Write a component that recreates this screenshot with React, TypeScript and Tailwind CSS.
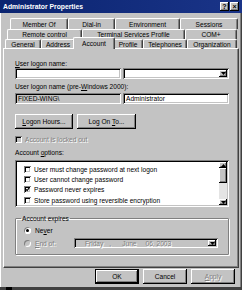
import React from "react";

const raised =
    "bg-[#c3c3c3] shadow-[inset_-1px_-1px_#000,inset_1px_1px_#fff,inset_-2px_-2px_#808080]";
const sunken =
    "shadow-[inset_1px_1px_#808080,inset_-1px_-1px_#fff,inset_2px_2px_#000,inset_-2px_-2px_#c3c3c3]";
const disabledText = "text-[#808080] [text-shadow:1px_1px_0_#fff]";

function Tab({ label, w, active }: { label: string; w: number; active?: boolean }) {
    return (
        <div
            style={{ width: w }}
            className={
                "flex shrink-0 items-center justify-center rounded-t-[2px] border-t border-l border-r border-t-white border-l-white border-r-[#404040] bg-[#c3c3c3] shadow-[inset_-1px_0_#808080] " +
                (active ? "relative z-10 -mb-[1px] -mx-[2px] h-[12px] pb-[1px]" : "h-full")
            }
        >
            {label}
        </div>
    );
}

function DropBtn() {
    return (
        <div className={"flex h-full w-[8px] shrink-0 items-center justify-center " + raised}>
            <svg width="5" height="3" viewBox="0 0 5 3">
                <path d="M0 0h5L2.5 3z" fill="#000" />
            </svg>
        </div>
    );
}

function Check({ checked, label }: { checked?: boolean; label: string }) {
    return (
        <div className="flex h-[10.3px] items-center">
            <div className={"ml-[7px] flex h-[7px] w-[7px] items-center justify-center bg-white " + sunken}>
                {checked && (
                    <svg width="5" height="5" viewBox="0 0 7 7">
                        <path d="M1 3l2 2 3-4" stroke="#000" strokeWidth="1.6" fill="none" />
                    </svg>
                )}
            </div>
            <span className="ml-[3px]">{label}</span>
        </div>
    );
}

export default function App() {
    return (
        <div
            className="relative h-[290px] w-[242px] overflow-hidden whitespace-nowrap bg-[#c3c3c3] text-[6.6px] leading-[9px] text-black shadow-[inset_1px_0_#fff,inset_-1px_0_#404040,inset_-2px_0_#808080]"
            style={{ fontFamily: '"Liberation Sans", Arial, sans-serif' }}
        >
            {/* title bar */}
            <div className="flex h-[13px] items-center bg-gradient-to-r from-[#0a2470] to-[#1a3488] pr-[3px] pl-[3px]">
                <span className="text-[6.8px] font-bold text-white">Administrator Properties</span>
                <div className="ml-auto flex gap-[1px]">
                    <div className={"flex h-[9px] w-[9px] items-center justify-center text-[7px] font-bold " + raised}>?</div>
                    <div className={"flex h-[9px] w-[9px] items-center justify-center text-[7px] font-bold " + raised}>×</div>
                </div>
            </div>

            {/* tabs */}
            <div className="mt-[5px] flex flex-col">
                <div className="ml-[10px] flex h-[11px]">
                    <Tab label="Member Of" w={58} />
                    <Tab label="Dial-in" w={47} />
                    <Tab label="Environment" w={65} />
                    <Tab label="Sessions" w={58} />
                </div>
                <div className="ml-[7px] flex h-[10px]">
                    <Tab label="Remote control" w={75} />
                    <Tab label="Terminal Services Profile" w={103} />
                    <Tab label="COM+" w={52} />
                </div>
                <div className="ml-[5px] flex h-[9px] items-end">
                    <Tab label="General" w={36} />
                    <Tab label="Address" w={34} />
                    <Tab label="Account" w={42} active />
                    <Tab label="Profile" w={30} />
                    <Tab label="Telephones" w={44} />
                    <Tab label="Organization" w={50} />
                </div>
            </div>

            {/* panel */}
            <div className="mx-[3px] flex h-[220px] flex-col border-t border-l border-r border-b border-t-white border-l-white border-r-[#404040] border-b-[#404040] pr-[9px] pl-[11px] shadow-[inset_-1px_-1px_#808080]">
                <div className="mt-[10px]">
                    <u>U</u>ser logon name:
                </div>
                <div className="flex h-[11px] gap-[2px]">
                    <div className={"w-[106px] bg-white " + sunken} />
                    <div className={"flex w-[106px] items-stretch bg-white p-[2px] " + sunken}>
                        <div className="flex-1" />
                        <DropBtn />
                    </div>
                </div>
                <div className="mt-[3px]">
                    User logon name (pre-<u>W</u>indows 2000):
                </div>
                <div className="mt-[2px] flex h-[11px] gap-[2px]">
                    <div className={"flex w-[106px] items-center bg-[#c3c3c3] pl-[3px] " + sunken}>FIXED-WING\</div>
                    <div className={"flex w-[106px] items-center bg-white pl-[3px] " + sunken}>Administrator</div>
                </div>
                <div className="mt-[10px] flex h-[15px] gap-[4px]">
                    <div className={"flex w-[58px] items-center justify-center " + raised}>
                        <span>
                            <u>L</u>ogon Hours...
                        </span>
                    </div>
                    <div className={"flex w-[59px] items-center justify-center " + raised}>
                        <span>
                            Log On <u>T</u>o...
                        </span>
                    </div>
                </div>
                <div className="mt-[6px] flex h-[8px] items-center">
                    <div className={"h-[7px] w-[7px] bg-[#c3c3c3] " + sunken} />
                    <span className={"ml-[3px] " + disabledText}>Account is locked out</span>
                </div>
                <div className="mt-[5px]">
                    Account <u>o</u>ptions:
                </div>
                <div className={"mt-[3px] flex h-[47px] bg-white p-[2px] " + sunken}>
                    <div className="flex-1 pt-[2px]">
                        <Check label="User must change password at next logon" />
                        <Check label="User cannot change password" />
                        <Check checked label="Password never expires" />
                        <Check label="Store password using reversible encryption" />
                    </div>
                    <div className="flex w-[8px] flex-col bg-[#e4e4e4]">
                        <div className={"flex h-[6px] items-center justify-center " + raised}>
                            <svg width="5" height="3" viewBox="0 0 5 3">
                                <path d="M0 3h5L2.5 0z" fill="#000" />
                            </svg>
                        </div>
                        <div className={"h-[15px] " + raised} />
                        <div className="flex-1" />
                        <div className={"flex h-[6px] items-center justify-center " + raised}>
                            <svg width="5" height="3" viewBox="0 0 5 3">
                                <path d="M0 0h5L2.5 3z" fill="#000" />
                            </svg>
                        </div>
                    </div>
                </div>
                <fieldset className="mt-[7px] h-[41px] rounded-[1px] border border-[#808080] pl-[8px] shadow-[1px_1px_#fff,inset_1px_1px_#fff]">
                    <legend className="-ml-[3px] px-[1px]">Account expires</legend>
                    <div className="mt-[3px] flex h-[9px] items-center">
                        <div className="flex h-[7px] w-[7px] items-center justify-center rounded-full bg-white shadow-[inset_1px_1px_#808080,inset_-1px_-1px_#fff]">
                            <div className="h-[3px] w-[3px] rounded-full bg-black" />
                        </div>
                        <span className="ml-[4px]">
                            Ne<u>v</u>er
                        </span>
                    </div>
                    <div className="mt-[3px] flex h-[10px] items-center">
                        <div className="h-[7px] w-[7px] shrink-0 rounded-full bg-[#c3c3c3] shadow-[inset_1px_1px_#808080,inset_-1px_-1px_#fff]" />
                        <span className={"ml-[4px] w-[39px] shrink-0 " + disabledText}>
                            <u>E</u>nd of:
                        </span>
                        <div className={"flex h-[10px] w-[144px] shrink-0 items-stretch p-[2px] " + sunken}>
                            <div className={"flex flex-1 items-center pl-[9px] " + disabledText}>
                                <span>Friday</span>
                                <span className="ml-[6px]">,</span>
                                <span className="ml-[11px]">June</span>
                                <span className="ml-[9px]">06, 2003</span>
                            </div>
                            <DropBtn />
                        </div>
                    </div>
                </fieldset>
            </div>

            {/* buttons */}
            <div className="mt-[1px] mr-[7px] flex h-[15px] justify-end gap-[4px]">
                <div className="flex w-[44px] items-center justify-center border border-black bg-[#c3c3c3] shadow-[inset_-1px_-1px_#000,inset_1px_1px_#fff,inset_-2px_-2px_#808080]">
                    OK
                </div>
                <div className={"flex w-[44px] items-center justify-center " + raised}>Cancel</div>
                <div className={"flex w-[44px] items-center justify-center " + raised}>
                    <span className={disabledText}>
                        <u>A</u>pply
                    </span>
                </div>
            </div>
            <div className="mt-[3px] flex h-[4px] bg-[#404040]">
                <div className="ml-[6px] h-full w-[6px] bg-black" />
            </div>
        </div>
    );
}
